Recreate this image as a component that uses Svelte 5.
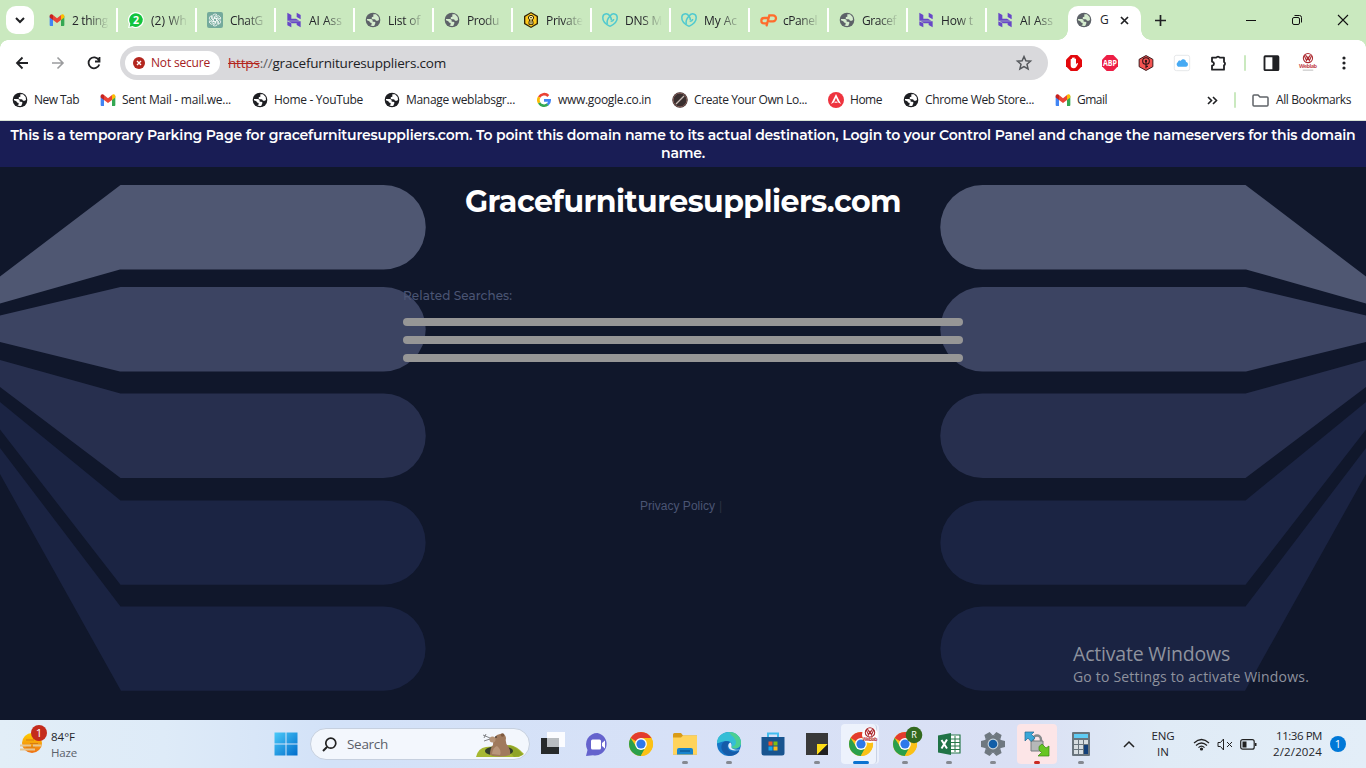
<script>
  // Spreads or tightens the letters of a label so that it fills the given width.
  function fit(node, width) {
    const natural = node.getBoundingClientRect().width;
    const count = node.textContent.length;
    node.style.letterSpacing = `${(width - natural) / count}px`;
  }

  const tabs = [
    ['gmail', '2 thing', 36], ['whatsapp', '(2) Wh', 36], ['gpt', 'ChatG', 33], ['hostinger', 'AI Ass', 33],
    ['globe', 'List of', 32], ['globe', 'Produ', 32], ['private', 'Private', 37], ['godaddy', 'DNS M', 37],
    ['godaddy', 'My Ac', 33], ['cpanel', 'cPanel', 34], ['globe', 'Gracef', 34], ['hostinger', 'How t', 32],
    ['hostinger', 'AI Ass', 33]
  ];

  const bookmarks = [
    ['globeDark', 'New Tab', 45], ['gmail', 'Sent Mail - mail.we...', 109], ['globeDark', 'Home - YouTube', 89],
    ['globeDark', 'Manage weblabsgr...', 109], ['google', 'www.google.co.in', 93],
    ['compass', 'Create Your Own Lo...', 113], ['angel', 'Home', 32], ['globeDark', 'Chrome Web Store...', 109],
    ['gmail', 'Gmail', 30]
  ];

  const extensions = ['hand', 'abp', 'keyhex', 'cloud', 'puzzle'];

  const apps = [
    ['taskview', ''], ['chat', ''], ['chrome', ''], ['folder', 'run'], ['edge', 'run'], ['store', ''],
    ['notes', 'run'], ['chromeW', 'active'], ['chromeR', 'run'], ['excel', 'run'], ['gear', 'run'],
    ['winscp', 'alert'], ['calc', 'run']
  ];

  const ribbons = [
    ['#4f5772', 'M0 276.500 120.500 185H383.500a42 42 0 0 1 0 84.500H120L0 303.500z'],
    ['#3c4462', 'M0 315.500 120.500 287H383.500a42 42 0 0 1 0 84.500H120L0 342z'],
    ['#272f4e', 'M0 360 120.500 393.500H383.500a42 42 0 0 1 0 84.500H120.500L0 387z'],
    ['#1b2443', 'M0 402 120.500 500.500H383.500a42 42 0 0 1 0 84.300H120.500L0 429.500z'],
    ['#1a2342', 'M0 448 120.500 606.500H383.500a42 42 0 0 1 0 84.200H121L0 474z']
  ];
</script>

{#snippet chromeDisc()}
  <circle cx="12" cy="12" r="12" fill="#fbc116" />
  <path d="M12 12 1.600 6A12 12 0 0 1 22.400 6z" fill="#e33b2e" />
  <path d="M1.600 6 7.300 14.700 16.800 14.700 11.800 24A12 12 0 0 1 1.600 6z" fill="#2a9f4b" />
  <path d="M12 6H22.400A12 12 0 0 1 11.800 24L17 15z" fill="#fbc116" />
  <circle cx="12" cy="12" r="5.900" fill="#fff" />
  <circle cx="12" cy="12" r="4.600" fill="#2e78ea" />
{/snippet}

{#snippet crest()}
  <circle cx="12" cy="7.500" r="5.500" fill="#fff" stroke="#ad2b31" stroke-width="1.300" />
  <path d="M7.500 4.500 10.300 10.500 12 6.500 13.700 10.500 16.500 4.500M9 3.500 12 8.500 15 3.500" fill="none" stroke="#ad2b31" stroke-width="1.300" />
{/snippet}

{#snippet icon(name, size)}
  <svg class="icon" width={size} height={size} viewBox="0 0 24 24" aria-hidden="true">
    {#if name === 'gmail'}
      <path d="M1 6v13.500c0 .8.700 1.500 1.500 1.500H6V10z" fill="#4285f4" />
      <path d="M23 6v13.500c0 .8-.7 1.500-1.500 1.500H18V10z" fill="#34a853" />
      <path d="M6 4.500V12l6 4.500 6-4.500V4.500l-6 4.700z" fill="#ea4335" />
      <path d="M1 6v2.200L6 12V4.500l-1-.7C3 2.500 1 4 1 6z" fill="#c5221f" />
      <path d="M23 6v2.200L18 12V4.500l1-.7c2-1.300 4 .2 4 2.200z" fill="#fbbc04" />
    {:else if name === 'globe' || name === 'globeDark'}
      <circle cx="12" cy="12" r="11" fill={name === 'globe' ? '#5d6268' : '#1d1e22'} />
      <path d="M3 10.500h5.500q3 0 3 2.500v1.500H14q2.300.3 1.500 2.500L14 20.500q-3 1-6-.5 2.500-.3 2-3.500-3 0-3.500-2.500L3 12.500zM12.500 3.500h4q4.500 3 4.500 8-2 2.500-4.500 1.500-1-2.500-3.500-2-3.500.3-3-2.500 0-1.500 2.500-1.500z" fill={name === 'globe' ? '#d5ecce' : '#fff'} />
    {:else if name === 'whatsapp'}
      <path d="M12 0a12 12 0 1 1-5.500 22.700L0 24l1.500-6A12 12 0 0 1 12 0z" fill="#fff" />
      <path d="M12 1.700A10.300 10.300 0 1 1 6.800 21L2.500 22l1-4.400A10.300 10.300 0 0 1 12 1.700z" fill="#13c43d" />
      <text x="12" y="17.800" text-anchor="middle" font-size="16" font-weight="700" fill="#fff">2</text>
    {:else if name === 'gpt'}
      <rect width="24" height="24" rx="3" fill="#74aa9c" />
      <g fill="none" stroke="#fff" stroke-width="1.100">
        {#each [0, 60, 120, 180, 240, 300] as turn}
          <path d="M12 9.300 8.500 11.300V6.500q0-3.500 3.500-3.500 2 0 3 1.300L11 6.700v3.500" transform={`rotate(${turn} 12 12)`} />
        {/each}
      </g>
    {:else if name === 'hostinger'}
      <path d="M2 1 8 4.500V10h7l5 3H2zM16 1l6 3.500V11l-6-3.500zM2 14l6 3V23L2 20zM4 14h18v9l-6-3.500V17H9z" fill="#6747c7" />
    {:else if name === 'private'}
      <path d="M12 0 22.500 6v12L12 24 1.500 18V6z" fill="#302307" />
      <path d="M12 2 20.500 7v10L12 22 3.500 17V7z" fill="#ffc91b" />
      <path d="M9 18.500V15l1-3-2-3q0-4 4-4t4 4l-2 3 1 3v3.500z" fill="#fff0a0" stroke="#302307" stroke-width="1.500" />
      <path d="M12 17v-6M10.500 8.500h3" stroke="#302307" stroke-width="1.300" />
    {:else if name === 'godaddy'}
      <g fill="none" stroke="#4fc9cf" stroke-width="2.300"><path d="M12 21.500C5 18 .8 13 1.200 8 1.500 2 8 1 12 6q2 3 2 6" /><path d="M12 21.500c7-3.500 11.200-8.500 10.800-13.500C22.500 2 16 1 12 6c-3.500 4-5 9-4 12M13 14q4 0 4.500-3.500" /></g>
    {:else if name === 'cpanel'}
      <path d="M11 9H6a4 4 0 0 0 0 8h3M10 20 14 5h5.500a4.200 4.200 0 0 1 0 9H14.500" fill="none" stroke="#ff6c2c" stroke-width="3.400" stroke-linecap="round" />
    {:else if name === 'google'}
      <g fill="none" stroke-width="4"><path d="M18.500 6A8.500 8.500 0 0 0 4.700 7.800" stroke="#ea4335" /><path d="M4.700 7.800a8.500 8.500 0 0 0 0 8.500" stroke="#fbbc04" /><path d="M4.700 16.300A8.500 8.500 0 0 0 17.700 18.500" stroke="#34a853" /><path d="M17.500 18.700c2-1.500 3-4 3-6.200h-8.500" stroke="#4285f4" /></g>
    {:else if name === 'compass'}
      <circle cx="12" cy="12" r="11.500" fill="#392f2f" /><circle cx="12" cy="12" r="10.300" fill="none" stroke="#865e59" stroke-width="1.500" /><path d="M6 18 18 6" stroke="#c9bcb6" stroke-width="1.800" />
    {:else if name === 'angel'}
      <circle cx="12" cy="12" r="12" fill="#ee343f" /><path d="m4.500 18 7.500-15 7.500 15-4.500-2.500L12 8.500l-3 7zM9 16l3-2 3 2z" fill="#fff" />
    {:else if name === 'hand'}
      <path d="M7 0h10l7 7v10l-7 7H7l-7-7V7z" fill="#e3080c" /><path d="M7 12V6.500q1-1.500 2 0V11V4.500q1-1.500 2 0V11 4q1-1.500 2 0v7-5q1-1.500 2 0v8q2-3 3-1.500 0 2-3 6-1 1.500-3.500 1.500Q7 20 7 15z" fill="#fff" />
    {:else if name === 'abp'}
      <path d="M7 0h10l7 7v10l-7 7H7l-7-7V7z" fill="#ed1e45" /><text x="12" y="16.500" text-anchor="middle" font-size="12" font-weight="700" fill="#fff" textLength="21" lengthAdjust="spacingAndGlyphs">ABP</text>
    {:else if name === 'keyhex'}
      <path d="M12 .8 22.300 6.500v11L12 23.200 1.700 17.500v-11z" fill="#f35452" stroke="#301417" stroke-width="1.400" /><circle cx="12" cy="9" r="5" fill="#f35452" stroke="#301417" stroke-width="1.600" /><circle cx="12" cy="9" r="1.800" fill="#301417" /><path d="M12 10v10m0-3h3" stroke="#301417" stroke-width="1.700" />
    {:else if name === 'cloud'}
      <rect x=".5" y=".5" width="23" height="23" rx="3" fill="#fff" stroke="#d9dcdf" /><path d="M6 17.500a4 4 0 0 1 0-7c0-2 2.500-3 4-1.500 2-4 8-3 8 1.500 4 0 4 7 0 7z" fill="#47aaf3" />
    {:else if name === 'puzzle'}
      <path d="M3 4h6.500a2.800 2.800 0 0 1 5 0H21v6.500a2.800 2.800 0 0 1 0 5V22H3v-6q3-.5 3-3t-3-3z" fill="none" stroke="#202124" stroke-width="2.700" stroke-linejoin="round" />
    {:else if name === 'panel'}
      <rect x="2" y="3" width="18.500" height="18.500" rx="1" fill="none" stroke="#202124" stroke-width="2.500" /><path d="M12.500 3h8v18.500h-8z" fill="#202124" />
    {:else if name === 'crest'}
      <g transform="translate(-1.500 -3) scale(1.120)">{@render crest()}</g>
      <text x="12" y="19" text-anchor="middle" font-size="7.500" font-weight="700" fill="#c54b4e" textLength="24">Weblab</text>
      <path d="M5 21.500h14" stroke="#aaa" />
    {:else if name === 'taskview'}
      <path d="M0 6h18v16H0z" fill="#272a2b" /><path d="M6 0h18v15H6z" fill="#fff" opacity=".9" /><path d="M6 6h12v9H6z" fill="#b9bdc1" />
    {:else if name === 'chat'}
      <path d="M12.500 1A11.300 11.300 0 1 1 8 23.200L1 24l1.500-6A11.400 11.400 0 0 1 12.500 1z" fill="#6563cd" /><rect x="6" y="7.500" width="10" height="10" rx="1.500" fill="#fff" /><path d="m17 11 3-2.500v8L17 14z" fill="#fff" />
    {:else if name === 'chrome'}
      {@render chromeDisc()}
    {:else if name === 'chromeW'}
      {@render chromeDisc()}
      <circle cx="21" cy="3" r="8" fill="#fff" /><g transform="translate(10.800 -6) scale(.85)">{@render crest()}</g><text x="21" y="9" text-anchor="middle" font-size="5" font-weight="700" fill="#bd3b3e" textLength="15">Weblab</text>
    {:else if name === 'chromeR'}
      {@render chromeDisc()}
      <circle cx="21" cy="3" r="8.300" fill="#33691e" /><text x="21" y="6" text-anchor="middle" font-size="9" fill="#fff">R</text>
    {:else if name === 'folder'}
      <path d="M0 2.500Q0 1 1.500 1H8l2 2.500h14V22.500H0z" fill="#d99b17" /><path d="M0 5.500h8l2-2h14V22.500H0z" fill="#ffd35b" /><path d="M4 22.500V18q0-2 2-2h12q2 0 2 2v4.500z" fill="#1784cc" /><path d="M7 19h10" stroke="#0c5b9a" stroke-width="1.500" />
    {:else if name === 'edge'}
      <circle cx="12" cy="12" r="12" fill="#1676c8" /><path d="M0 11C0 4 6 0 12 0c7 0 12 5 12 10.500 0 4-3 6-6.500 6-3 0-4-1.500-3-3 1-2-.5-4.500-4-4.500C5 9 1 12 0 11z" fill="#35bed6" /><path d="M12 0c7 0 12 5 12 10.500 0 4-3 6-6.500 6-2 0-3-1-3-2 6 0 6-7 0-11z" fill="#4ccf92" /><path d="M5.500 11C2 17 7 24 14 23.700c4-.2 7-2 8.500-5-5 2-12 1-12-4 0-2 1-3 2-4-2-2-5-2-7 .3z" fill="#155ba8" /><path d="M13.500 10.500c-3 1-3 5 0 7 3 1.500 7 1 9.500 0-2 1-8-.3-8.500-2-.5-1.500 1-2.500-1-5z" fill="#e1edf8" />
    {:else if name === 'store'}
      <path d="M7 6V1.500h10V6" fill="none" stroke="#42bdef" stroke-width="2" /><path d="M.5 5h23v16q0 2.500-2.500 2.500H3Q.5 23.500.5 21z" fill="#18548f" /><path d="M7.500 9.500h4v4h-4z" fill="#f25325" /><path d="M12.500 9.500h4v4h-4z" fill="#80bd10" /><path d="M7.500 14.500h4v4h-4z" fill="#15a7ee" /><path d="M12.500 14.500h4v4h-4z" fill="#fcba17" />
    {:else if name === 'notes'}
      <path d="M1 1h22v22H1z" fill="#393939" /><path d="M12 12h11L12 23z" fill="#ffdd16" /><path d="M23 12v11H12z" fill="#202020" />
    {:else if name === 'excel'}
      <path d="M13 3h10v18H13z" fill="#fff" stroke="#29794b" stroke-width="1.200" /><path d="M14 7h9m-9 3.500h9M14 14h9m-9 3.500h9M18 4v16" stroke="#29794b" /><path d="m1 3.500 13-2.500v22L1 20.500z" fill="#207346" /><path d="m4.500 8 5.500 8.500M10 7.500 4.500 16.500" stroke="#fff" stroke-width="2" />
    {:else if name === 'gear'}
      <g fill="#6f7880"><circle cx="12" cy="12" r="9" />{#each [30, 90, 150, 210, 270, 330] as turn}<path d="M8 4 9 0h6l1 4z" transform={`rotate(${turn} 12 12)`} />{/each}</g><circle cx="12" cy="12" r="5.400" fill="#c7d3dc" /><circle cx="12" cy="12" r="4.300" fill="#125ea7" />
    {:else if name === 'winscp'}
      <path d="M8 10V8c0-6 8-6 8 0v2" fill="none" stroke="#858a8c" stroke-width="2.500" /><path d="M6 9h12v10H6z" fill="#b5b8b9" stroke="#777d80" /><path d="M0 0h9L6.500 2.500 10 6 6 9.500 3 6 0 9z" fill="#39a7d8" stroke="#226890" stroke-width=".7" /><path d="M14 14.500 17 12l4 4 3-2v10H13l3.500-3.500L14 18z" fill="#67c622" stroke="#398516" stroke-width=".7" />
    {:else if name === 'calc'}
      <rect x="3" width="18" height="24" rx="1" fill="#69747d" /><path d="M5 2h14v4H5z" fill="#5fcbf3" /><path d="M5 8h4v4H5zm5 0h4v4h-4zm5 0h4v4h-4zM5 13h4v4H5zm5 0h4v4h-4zm-5 5h4v4H5zm5 0h4v4h-4z" fill="#d7dde1" /><path d="M15 13h4v9h-4z" fill="#123f79" />
    {/if}
  </svg>
{/snippet}

<div class="screen">
  <div class="tabstrip">
    <button class="tabsearch" aria-label="Search tabs"><svg width="10" height="7" viewBox="0 0 10 7"><path d="m1 1 4 4 4-4" fill="none" stroke="#202124" stroke-width="2" /></svg></button>
    <div class="tabs">
      {#each tabs as [glyph, label, width], i}
        <div class="tab" class:last={i === 12}>{@render icon(glyph, 16)}<div class="clip"><span use:fit={width}>{label}</span></div></div>
      {/each}
    </div>
    <div class="tab current">
      {@render icon('globe', 16)}<span>G</span>
      <svg width="9" height="9" viewBox="0 0 9 9"><path d="m1 1 7 7M8 1 1 8" stroke="#202124" stroke-width="1.700" /></svg>
    </div>
    <svg class="plus" width="11" height="11" viewBox="0 0 11 11"><path d="M5.500 0v11M0 5.500h11" stroke="#202124" stroke-width="1.700" /></svg>
    <div class="controls">
      <svg width="12" height="12" viewBox="0 0 12 12"><path d="M1 6.500h10" stroke="#111" /></svg>
      <svg width="12" height="12" viewBox="0 0 12 12"><rect x="1.500" y="3.500" width="7" height="7" rx="1.500" fill="none" stroke="#111" /><path d="M3.500 1.500H8.500q2 0 2 2v5" fill="none" stroke="#111" /></svg>
      <svg width="12" height="12" viewBox="0 0 12 12"><path d="m1 1 10 10M11 1 1 11" stroke="#111" stroke-width="1.100" /></svg>
    </div>
  </div>

  <div class="toolbar">
    <div class="cell"><svg width="14" height="14" viewBox="0 0 14 14"><path d="M7.500 1.500 2 7l5.500 5.500M2 7h11" fill="none" stroke="#202124" stroke-width="1.800" /></svg></div>
    <div class="cell"><svg width="14" height="14" viewBox="0 0 14 14"><path d="M6.500 1.500 12 7l-5.500 5.500M12 7H1" fill="none" stroke="#9b9c9e" stroke-width="1.600" /></svg></div>
    <div class="cell"><svg width="14" height="14" viewBox="0 0 14 14"><path d="M11.800 4A5.500 5.500 0 1 0 12.300 8.500M12.500 1v4.500H8" fill="none" stroke="#202124" stroke-width="1.800" /></svg></div>
    <div class="omnibox">
      <div class="chip">
        <svg width="12" height="12" viewBox="0 0 12 12"><circle cx="6" cy="6" r="6" fill="#b3261e" /><path d="m4 4 4 4m0-4L4 8" stroke="#fff" stroke-width="1.400" /></svg>
        <span use:fit={59}>Not secure</span>
      </div>
      <div class="url"><span use:fit={218}><s>https</s><i>://</i>gracefurnituresuppliers.com</span></div>
      <svg class="star" width="16" height="16" viewBox="0 0 16 16"><path d="m8 1.500 1.900 4.300 4.600.4-3.500 3.100 1.100 4.600L8 11.500l-4.100 2.400L5 9.300 1.500 6.200l4.600-.4z" fill="none" stroke="#55585c" stroke-width="1.500" /></svg>
    </div>
    {#each extensions as name}<div class="cell">{@render icon(name, 16)}</div>{/each}
    <div class="divider"></div>
    <div class="cell">{@render icon('panel', 18)}</div>
    <div class="cell">{@render icon('crest', 18)}</div>
    <div class="cell"><svg width="4" height="14" viewBox="0 0 4 14" fill="#202124"><circle cx="2" cy="2" r="1.600" /><circle cx="2" cy="7" r="1.600" /><circle cx="2" cy="12" r="1.600" /></svg></div>
  </div>

  <div class="bookmarks">
    {#each bookmarks as [glyph, label, width]}
      <div class="bookmark">{@render icon(glyph, 16)}<span use:fit={width}>{label}</span></div>
    {/each}
    <div class="overflow">
      <svg width="11" height="9" viewBox="0 0 11 9"><path d="m1 1 3.500 3.500L1 8M6 1l3.500 3.500L6 8" fill="none" stroke="#202124" stroke-width="1.600" /></svg>
      <div class="divider"></div>
      <svg width="17" height="13" viewBox="0 0 17 13"><path d="M1 2q0-1 1-1h4l2 2h7q1 0 1 1v7q0 1-1 1H2q-1 0-1-1z" fill="none" stroke="#5f6368" stroke-width="1.500" /></svg>
      <span use:fit={75}>All Bookmarks</span>
    </div>
  </div>

  <main>
    <svg class="ribbons" width="1366" height="599" viewBox="0 121 1366 599" aria-hidden="true">
      {#each ribbons as [color, d]}
        <path {d} fill={color} /><path {d} fill={color} transform="translate(1366 0) scale(-1 1)" />
      {/each}
    </svg>
    <div class="banner">
      <span use:fit={1345}>This is a temporary Parking Page for gracefurnituresuppliers.com. To point this domain name to its actual destination, Login to your Control Panel and change the nameservers for this domain</span>
      <span use:fit={44}>name.</span>
    </div>
    <h1><span use:fit={436}>Gracefurnituresuppliers.com</span></h1>
    <section>
      <p><span use:fit={109}>Related Searches:</span></p>
      <div class="bar"></div><div class="bar"></div><div class="bar"></div>
    </section>
    <footer><span use:fit={75}>Privacy Policy</span><b>|</b></footer>
    <div class="watermark"><span class="title" use:fit={157}>Activate Windows</span><span use:fit={236}>Go to Settings to activate Windows.</span></div>
  </main>

  <div class="taskbar">
    <div class="weather">
      <svg width="30" height="32" viewBox="0 0 30 32"><defs><linearGradient id="sun" x2="0" y2="1"><stop stop-color="#ffd000" /><stop offset="1" stop-color="#ee7116" /></linearGradient></defs><circle cx="14" cy="18" r="10" fill="url(#sun)" /><path d="M8 15h8m3 0h4M12 18.500h8M8 22h9" stroke="#d77c12" /><path d="M2 20.500h11m2 0h8M2 24.500h15" stroke="#e6c592" stroke-width="1.800" /><circle cx="21" cy="8" r="8" fill="#c42b1c" /><text x="21" y="12" text-anchor="middle" font-size="11.500" fill="#fff">1</text></svg>
      <div><span use:fit={24}>84°F</span><span class="dim" use:fit={26}>Haze</span></div>
    </div>
    <div class="app start"><svg width="24" height="24" viewBox="0 0 24 24"><defs><linearGradient id="win" x2="1" y2="1"><stop stop-color="#4bcaf9" /><stop offset="1" stop-color="#006ccb" /></linearGradient></defs><path d="M.5.500h11v11H.5zm12 0h11v11h-11zM.5 12.500h11v11H.5zm12 0h11v11h-11z" fill="url(#win)" /></svg></div>
    <div class="search">
      <svg width="15" height="15" viewBox="0 0 15 15"><circle cx="8.800" cy="6.200" r="5" fill="none" stroke="#222" stroke-width="1.700" /><path d="m5 10-4 4" stroke="#222" stroke-width="2" /></svg>
      <span use:fit={41}>Search</span>
      <svg class="groundhog" width="50" height="28" viewBox="0 0 50 28"><path d="M1 26q2-9 10-10l24-2q7 1 14 9l-5 3z" fill="#a6b832" /><path d="M30 15q9-3 18 9l-9 2z" fill="#8fa428" /><ellipse cx="24" cy="20" rx="14" ry="5" fill="#323d2a" /><path d="M15 24q0-7 3-10 0-10 7-11 5-1 6 4-1 5 2 8 3 5 2 9-10 3-20 0z" fill="#a07a5d" /><path d="M17 23q1-7 5-8 5 4 3 9z" fill="#b9967a" /><circle cx="17.500" cy="8.500" r="3" fill="#b59377" /><circle cx="27.500" cy="4" r="1.800" fill="#7f5b41" /><circle cx="21" cy="6" r=".8" fill="#222" /><path d="m8 4 7 3m-6 3 6-2M11 3l-2 4" stroke="#66686c" stroke-width=".8" /></svg>
    </div>
    {#each apps as [glyph, state]}
      <div class={`app ${state}`}>{@render icon(glyph, 24)}</div>
    {/each}
    <div class="tray">
      <svg width="12" height="7" viewBox="0 0 12 7"><path d="m1 6 5-5 5 5" fill="none" stroke="#222" stroke-width="1.500" /></svg>
      <div class="lang"><span use:fit={23}>ENG</span><span use:fit={12}>IN</span></div>
      <svg width="17" height="13" viewBox="0 0 17 13" fill="none" stroke="#222" stroke-width="1.200"><path d="M1 5q7.500-7 15 0M3 7.500q5.500-5 11 0M5.500 9.700q3-3 6 0" /><circle cx="8.500" cy="11" r="1" fill="#222" /></svg>
      <svg width="16" height="13" viewBox="0 0 16 13" fill="none" stroke="#222"><path d="M1 4.500h2.500l3-3.500v11l-3-3.500H1zM10 4l5 5m0-5-5 5" /></svg>
      <svg width="17" height="11" viewBox="0 0 17 11"><rect x=".7" y=".7" width="13.500" height="9.500" rx="2" fill="none" stroke="#222" stroke-width="1.200" /><path d="M2.500 2.500h4v6h-4zM15 4h1.500v3H15z" fill="#222" /></svg>
      <div class="clock"><span use:fit={46}>11:36 PM</span><span use:fit={49}>2/2/2024</span></div>
      <div class="count">1</div>
    </div>
  </div>
</div>

<style>
  :global(body) { margin: 0; overflow: hidden; }
  .screen { width: 1366px; height: 768px; display: flex; flex-direction: column; background: #fff; font-family: "Open Sans", "Noto Sans", sans-serif; font-size: 12px; line-height: 16px; color: #24252a; overflow: hidden; }
  svg { display: block; flex: none; overflow: visible; }
  span { white-space: nowrap; }

  .tabstrip { height: 40px; flex: none; background: #cae9bf; display: flex; align-items: center; box-sizing: border-box; padding-left: 6px; }
  .tabsearch { width: 28px; height: 28px; border: 0; padding: 0; border-radius: 10px; background: #fff; display: grid; place-items: center; }
  .tabs { display: flex; margin-left: 5px; }
  .tab { width: 79px; height: 24px; box-sizing: border-box; padding-left: 9.5px; display: flex; align-items: center; gap: 7.5px; border-right: 2px solid #fff; }
  .tab.last { border-right-color: transparent; }
  .clip { width: 39px; overflow: hidden; line-height: 20px; padding-top: 1px; -webkit-mask-image: linear-gradient(90deg, #000 16px, transparent 37px); mask-image: linear-gradient(90deg, #000 16px, transparent 37px); }
  .current { position: relative; width: 73px; height: 34px; align-self: flex-end; margin-left: 2px; padding: 0 12px 6px 8px; border: 0; background: #fff; border-radius: 10px 10px 0 0; gap: 8px; }
  .current svg:last-child { margin-left: auto; }
  .current::before, .current::after { content: ""; position: absolute; bottom: 0; width: 10px; height: 10px; }
  .current::before { left: -10px; background: radial-gradient(circle at 0 0, transparent 9.5px, #fff 10px); }
  .current::after { right: -10px; background: radial-gradient(circle at 100% 0, transparent 9.5px, #fff 10px); }
  .plus { margin-left: 14px; }
  .controls { margin-left: auto; display: flex; gap: 34px; padding-right: 17px; }

  .toolbar { position: relative; height: 46px; flex: none; background: #fff; display: flex; align-items: center; padding-left: 4px; }
  .toolbar::before, .toolbar::after { content: ""; position: absolute; top: 0; width: 8px; height: 8px; }
  .toolbar::before { left: 0; background: radial-gradient(circle at 100% 100%, transparent 7.5px, #cae9bf 8px); }
  .toolbar::after { right: 0; background: radial-gradient(circle at 0 100%, transparent 7.5px, #cae9bf 8px); }
  .cell { width: 36px; flex: none; display: grid; place-items: center; }
  .omnibox { width: 928px; height: 34px; flex: none; box-sizing: border-box; margin: 0 8px; padding: 0 16px 0 5px; border-radius: 17px; background: #d9d9dc; display: flex; align-items: center; }
  .chip { width: 95px; height: 24px; box-sizing: border-box; padding-left: 8px; border-radius: 12px; background: #fff; display: flex; align-items: center; gap: 6px; color: #a4201d; font-size: 12px; }
  .url { margin-left: 8px; font-size: 13.5px; line-height: 20px; color: #202124; }
  .url s { color: #b3261e; }
  .url i { font-style: normal; color: #5c5d60; }
  .star { margin-left: auto; }
  .divider { width: 2px; height: 16px; margin: 0 8px; background: #cae9bf; border-radius: 1px; flex: none; }

  .bookmarks { height: 35px; flex: none; box-sizing: border-box; display: flex; align-items: center; gap: 21px; padding: 0 15px 6px 12px; border-bottom: 1px solid #d7e2d5; }
  .bookmark { display: flex; align-items: center; gap: 6px; }
  .overflow { margin-left: auto; display: flex; align-items: center; }
  .overflow .divider { margin: 0 16px; }
  .overflow span { margin-left: 7px; }

  main { position: relative; height: 599px; flex: none; background: #10172b; overflow: hidden; font-family: Montserrat, Inter, sans-serif; }
  .ribbons { position: absolute; inset: 0; }
  .banner { position: relative; height: 46px; box-sizing: border-box; padding-top: 5px; background: #191d55; color: #fff; font-size: 14px; font-weight: 600; line-height: 18px; display: flex; flex-direction: column; align-items: center; }
  h1 { position: relative; margin: 14px 0 0; text-align: center; color: #fff; font-size: 30px; line-height: 41px; font-weight: 700; }
  section { position: relative; width: 560px; margin: 66px auto 0; }
  p { margin: 0 0 14px; height: 16px; font-size: 12px; font-weight: 500; color: #4b5574; }
  .bar { height: 8px; margin-bottom: 10px; border-radius: 4px; background: #969696; }
  footer { margin: 135px 0 0 640px; display: flex; gap: 4px; font: 12px/18px "Liberation Sans", sans-serif; color: #4b5574; }
  footer b { font-weight: 400; color: #2b3140; }
  .watermark { position: absolute; left: 1073px; top: 520px; display: flex; flex-direction: column; align-items: flex-start; color: #8e929e; font: 14px/20px "Open Sans", sans-serif; }
  .watermark .title { font-size: 19.5px; line-height: 26px; }

  .taskbar { height: 48px; flex: none; display: flex; align-items: center; background: linear-gradient(90deg, #e2eef7 0, #deebf8 12%, #d3e2f8 24%, #d7e1f7 50%, #dae0f4 75%, #e0ebf6 85%, #e3eef8 100%); }
  .weather { width: 264px; display: flex; align-items: center; gap: 3px; padding-left: 18px; box-sizing: border-box; font-size: 11.5px; }
  .weather svg { margin-top: -6px; }
  .weather div, .lang, .clock { display: flex; flex-direction: column; align-items: flex-start; }
  .weather div { padding-top: 2px; }
  .dim { color: #5b626b; }
  .app { width: 44px; height: 44px; flex: none; position: relative; display: grid; place-items: center; }
  .start { width: 43px; }
  .run::after, .active::after, .alert::after { content: ""; position: absolute; bottom: 2px; left: 19px; width: 6px; height: 3px; border-radius: 2px; background: #858991; }
  .active::after { left: 14px; width: 16px; background: #0b72d0; }
  .active::before, .alert::before { content: ""; position: absolute; inset: 2px 2px; border-radius: 4px; background: #edf2fc; box-shadow: 1px 0 1px #c5cede; }
  .active::before { right: 6px; border-right: 1px solid #c9d2e5; box-shadow: 2px 0 0 #e9effb; }
  .alert::before { background: #fce5e7; box-shadow: none; }
  .alert::after { background: #c92a22; }
  .app .icon { position: relative; }
  .search { width: 220px; height: 32px; flex: none; box-sizing: border-box; margin: 0 1px 0 3px; padding: 0 4px 0 11px; border: 1px solid #c6d0df; border-radius: 16px; background: #f3f7fd; display: flex; align-items: center; gap: 10px; color: #5b6069; font-size: 13.5px; }
  .groundhog { margin: 1px 0 0 auto; }
  .tray { margin-left: 20px; flex: 1; display: flex; align-items: center; font-size: 11.5px; }
  .lang { width: 24px; margin: 0 18px 0 16px; align-items: center; }
  .tray svg + svg { margin-left: 7px; }
  .clock { margin-left: auto; align-items: flex-end; }
  .count { width: 16px; height: 16px; margin: 0 20px 0 8px; border-radius: 50%; background: #0078d7; color: #fff; text-align: center; font-size: 11px; }
</style>
